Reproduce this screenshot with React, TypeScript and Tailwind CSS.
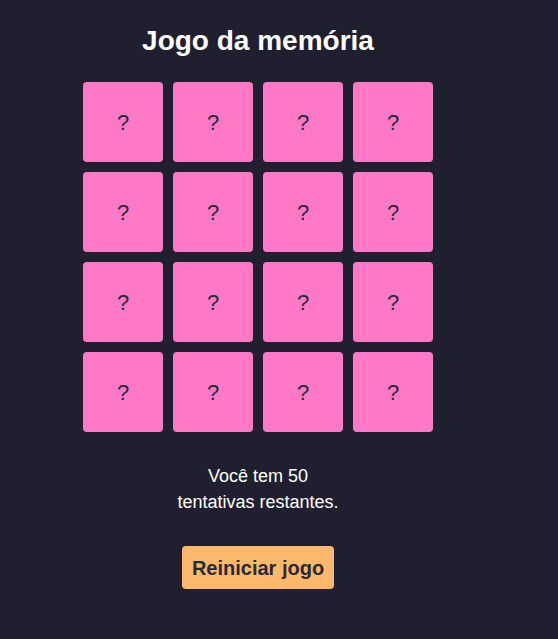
import React, { useState } from 'react';

const TOTAL_CARDS = 16;

const App = () => {
  const [tries] = useState(50);
  const cards = Array.from({ length: TOTAL_CARDS }, (_, i) => i);

  return (
    <div
      className="min-h-[639px] bg-[#1f1f2f] text-white"
      style={{ fontFamily: '"Liberation Sans", Arial, sans-serif' }}
    >
      <div className="w-[516px] flex flex-col items-center pt-[23px]">
        <h1 className="text-[28px] leading-[36px] font-bold">Jogo da memória</h1>

        {/* Board */}
        <div className="grid grid-cols-4 gap-[10px] mt-[23px]">
          {cards.map((c) => (
            <button
              key={c}
              className="w-[80px] h-[80px] rounded-[4px] bg-[#ff79c6] text-[#282a36] text-[22px] flex items-center justify-center"
            >
              ?
            </button>
          ))}
        </div>

        <p className="text-center text-[18px] leading-[26px] mt-[31px]">
          <span className="block">Você tem {tries}</span>
          <span className="block">tentativas restantes.</span>
        </p>

        <button className="mt-[31px] h-[43px] px-[10px] rounded-[4px] bg-[#ffb86c] text-[#282a36] text-[20px] font-bold">
          Reiniciar jogo
        </button>
      </div>
    </div>
  );
};

export default App;
